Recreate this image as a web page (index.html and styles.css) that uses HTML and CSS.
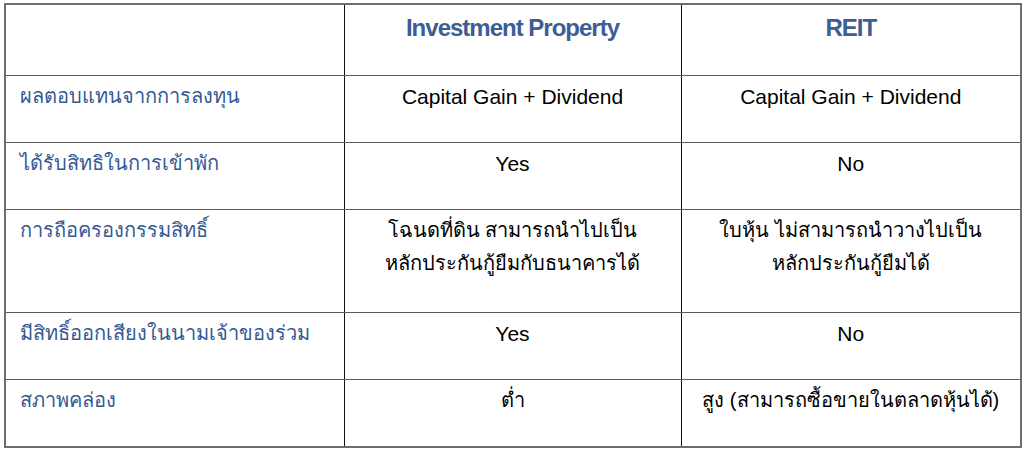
FILE: index.html
```html
<!DOCTYPE html>
<html lang="th">
<head>
<meta charset="utf-8">
<link rel="stylesheet" href="styles.css">
</head>
<body>
<table class="cmp">
  <colgroup><col class="c1"><col class="c2"><col class="c3"></colgroup>
  <tr class="head">
    <td></td>
    <td class="h">Investment Property</td>
    <td class="h">REIT</td>
  </tr>
  <tr>
    <td class="lbl">ผลตอบแทนจากการลงทุน</td>
    <td class="val en">Capital Gain + Dividend</td>
    <td class="val en">Capital Gain + Dividend</td>
  </tr>
  <tr>
    <td class="lbl">ได้รับสิทธิในการเข้าพัก</td>
    <td class="val en">Yes</td>
    <td class="val en">No</td>
  </tr>
  <tr class="tall">
    <td class="lbl">การถือครองกรรมสิทธิ์</td>
    <td class="val">โฉนดที่ดิน สามารถนำไปเป็น<br>หลักประกันกู้ยืมกับธนาคารได้</td>
    <td class="val">ใบหุ้น ไม่สามารถนำวางไปเป็น<br>หลักประกันกู้ยืมได้</td>
  </tr>
  <tr>
    <td class="lbl">มีสิทธิ์ออกเสียงในนามเจ้าของร่วม</td>
    <td class="val en">Yes</td>
    <td class="val en">No</td>
  </tr>
  <tr>
    <td class="lbl">สภาพคล่อง</td>
    <td class="val">ต่ำ</td>
    <td class="val">สูง (สามารถซื้อขายในตลาดหุ้นได้)</td>
  </tr>
</table>
</body>
</html>
```
FILE: styles.css
```css
html, body {
  margin: 0;
  padding: 0;
  background: #ffffff;
}
body {
  padding: 3px 4px 0 4px;
  font-family: "Liberation Sans", "Noto Sans", "DejaVu Sans", sans-serif;
  font-size: 20px;
  color: #000;
}
.cmp {
  border-collapse: collapse;
  width: 1016px;
  table-layout: fixed;
  border: 2px solid #6e6e6e;
}
.c1 { width: 339px; }
.c2 { width: 337px; }
.c3 { width: 340px; }
.cmp td {
  border-top: 1px solid #5a5a5a;
  border-bottom: 1px solid #5a5a5a;
  border-left: 1px solid #111;
  border-right: 1px solid #111;
  vertical-align: top;
  padding: 4px 14px 0 14px;
  line-height: 33px;
  height: 62px;
}
.cmp tr.head td {
  height: 64px;
  padding-top: 6px;
}
.cmp tr.tall td {
  height: 98px;
}
.h {
  text-align: center;
  color: #3d5d94;
  font-weight: bold;
  font-size: 24px;
  letter-spacing: -1px;
}
.lbl {
  color: #355a93;
  text-align: left;
}
.val {
  text-align: center;
}
.en {
  font-size: 21px;
}
```
